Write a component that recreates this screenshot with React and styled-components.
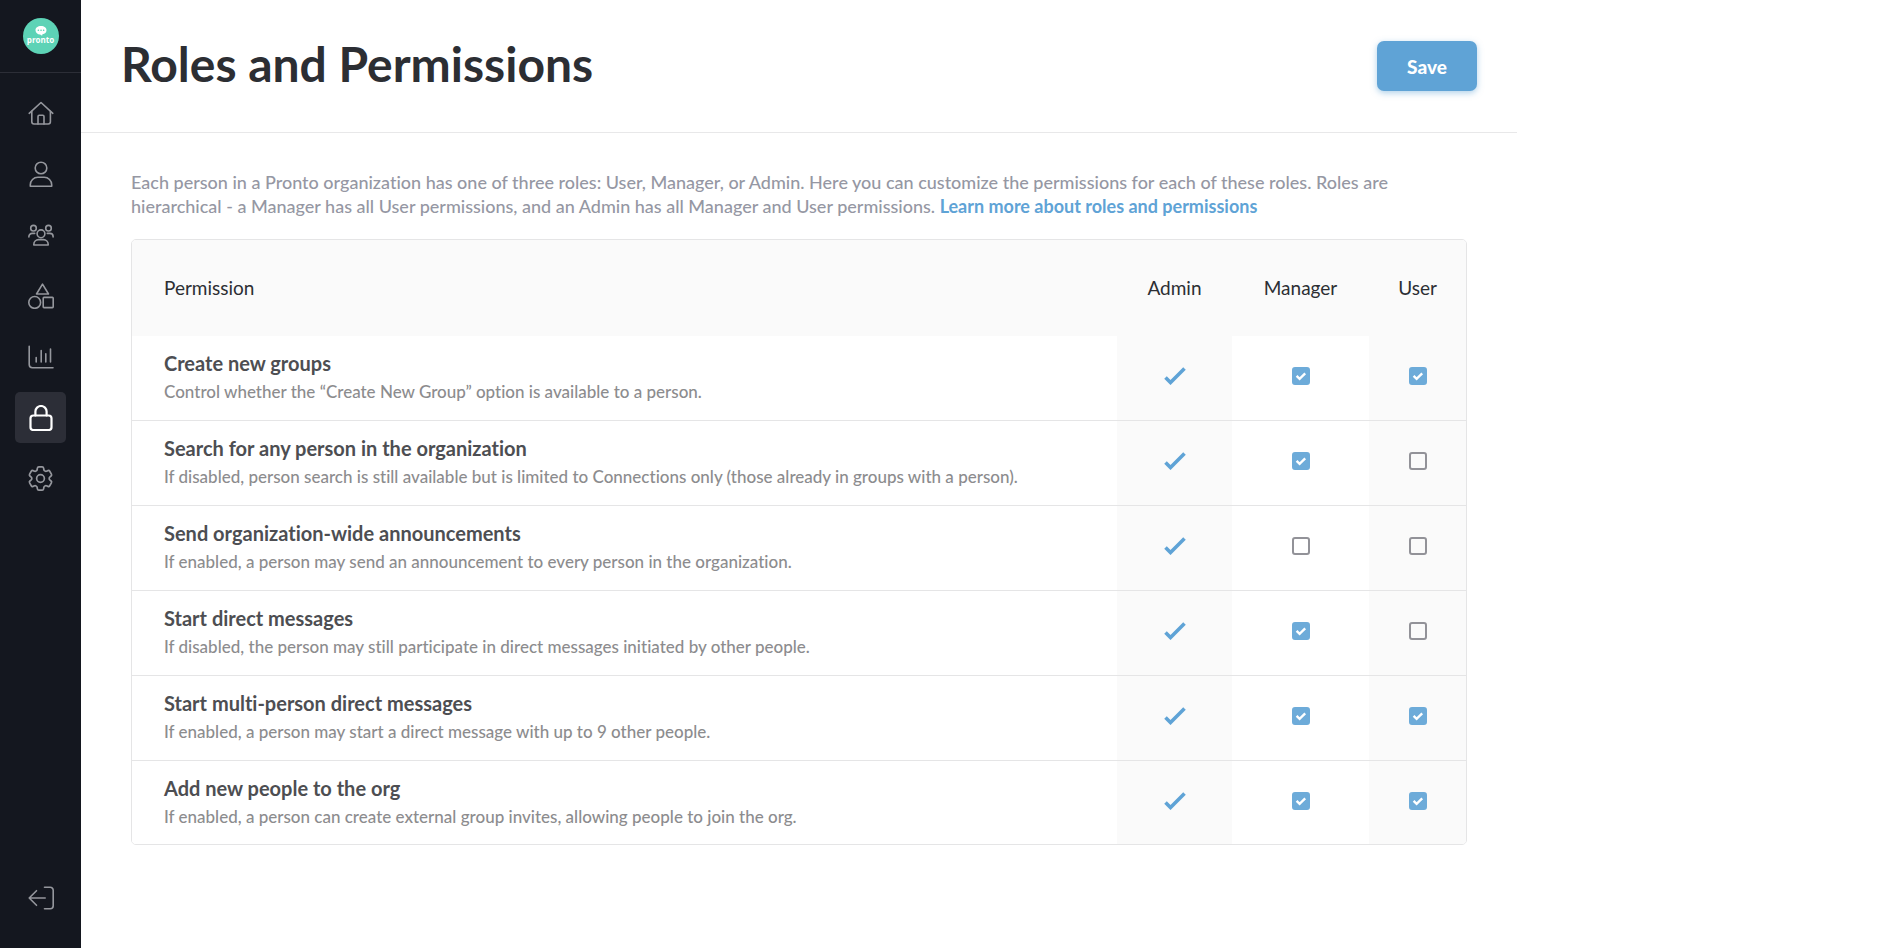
import React, { useState } from 'react';
import styled, { createGlobalStyle } from 'styled-components';
import { HiOutlineCog6Tooth } from 'react-icons/hi2';

const navItems = [
  {
    label: 'Home',
    icon: (
      <>
        <path d="M1.2 13.3 13 2.5l11.8 10.8" />
        <path d="M3.8 11.2v10.6a2.2 2.2 0 0 0 2.2 2.2h14.2a2.2 2.2 0 0 0 2.2-2.2V11.2" />
        <path d="M10 24v-7.5a1.2 1.2 0 0 1 1.2-1.2h3.6a1.2 1.2 0 0 1 1.2 1.2V24" />
      </>
    ),
  },
  {
    label: 'People',
    icon: (
      <>
        <circle cx="13" cy="7" r="5.8" />
        <path d="M2.3 25.2v-1.4a7.5 7.5 0 0 1 7.5-7.5h6.4a7.5 7.5 0 0 1 7.5 7.5v1.4z" />
      </>
    ),
  },
  {
    label: 'Groups',
    icon: (
      <>
        <circle cx="13" cy="11.8" r="3.9" />
        <circle cx="5.5" cy="6.2" r="2.8" />
        <circle cx="20.5" cy="6.2" r="2.8" />
        <path d="M5.8 23v-.6a4.8 4.8 0 0 1 4.8-4.8h4.8a4.8 4.8 0 0 1 4.8 4.8v.6z" />
        <path d="M.9 15v-.4a3.2 3.2 0 0 1 3.2-3.2h2.6M25.1 15v-.4a3.2 3.2 0 0 0-3.2-3.2h-2.6" />
      </>
    ),
  },
  {
    label: 'Categories',
    icon: (
      <>
        <path d="M14.5 1.2 20.5 11H8.5z" />
        <circle cx="6.7" cy="19.4" r="5.9" />
        <rect x="15.2" y="14.4" width="10" height="10.2" rx=".8" />
      </>
    ),
  },
  {
    label: 'Insights',
    icon: (
      <>
        <path d="M1.2 2.2v18.3a3.2 3.2 0 0 0 3.2 3.2H25" />
        <path d="M8.2 13.5V18M13.2 6.5V18M17.8 9.8V18M22.5 5V18" />
      </>
    ),
  },
  {
    label: 'Permissions',
    active: true,
    icon: (
      <>
        <rect x="2.5" y="10.5" width="21" height="14.5" rx="2.8" />
        <path d="M7.4 10.5V6.6a5.6 5.6 0 0 1 11.2 0v3.9" />
      </>
    ),
  },
];

const initialPermissions = [
  {
    id: 'create',
    title: 'Create new groups',
    text: 'Control whether the “Create New Group” option is available to a person.',
    manager: true,
    user: true,
  },
  {
    id: 'search',
    title: 'Search for any person in the organization',
    text: 'If disabled, person search is still available but is limited to Connections only (those already in groups with a person).',
    manager: true,
    user: false,
  },
  {
    id: 'announce',
    title: 'Send organization-wide announcements',
    text: 'If enabled, a person may send an announcement to every person in the organization.',
    manager: false,
    user: false,
  },
  {
    id: 'dm',
    title: 'Start direct messages',
    text: 'If disabled, the person may still participate in direct messages initiated by other people.',
    manager: true,
    user: false,
  },
  {
    id: 'multi',
    title: 'Start multi-person direct messages',
    text: 'If enabled, a person may start a direct message with up to 9 other people.',
    manager: true,
    user: true,
  },
  {
    id: 'invite',
    title: 'Add new people to the org',
    text: 'If enabled, a person can create external group invites, allowing people to join the org.',
    manager: true,
    user: true,
  },
];

const Check = ({ checked, label, onChange }) => (
  <CheckLabel>
    <CheckInput type="checkbox" aria-label={label} checked={checked} onChange={onChange} />
    {checked && (
      <CheckMark viewBox="0 0 18 18" aria-hidden="true">
        <path d="m4.6 8.8 3 3 5.6-5.4" />
      </CheckMark>
    )}
  </CheckLabel>
);

const Sidebar = () => (
  <Side>
    <LogoArea>
      <Logo href="#" aria-label="Pronto">
        <LogoBubble viewBox="0 0 12 10" aria-hidden="true">
          <path d="M6 0C2.7 0 .5 1.8.5 4.200S2.700 8.400 5 8.400c.8 0 1.200.9 2.300 1.200-.2-.6-.1-1 .3-1.300C9.900 7.800 11.500 6.300 11.500 4.200 11.500 1.800 9.300 0 6 0z" fill="#fff" />
          <path d="M3.300 4.200h.1M6 4.200h.1M8.600 4.200h.1" stroke="#5dd3b6" strokeWidth="1.500" strokeLinecap="round" />
        </LogoBubble>
        <LogoText>pronto</LogoText>
      </Logo>
    </LogoArea>
    <Nav>
      {navItems.map(({ label, icon, active }) => (
        <NavItem key={label} href="#" aria-label={label} $active={active}>
          <Icon viewBox="0 0 26 26">{icon}</Icon>
        </NavItem>
      ))}
      <NavItem href="#" aria-label="Settings">
        <HiOutlineCog6Tooth size={31} strokeWidth={1.3} />
      </NavItem>
    </Nav>
    <NavItem href="#" aria-label="Log out">
      <Icon viewBox="0 0 26 26">
        <path d="M17.200 13H1.200M8.500 5.700 1.200 13l7.300 7.300" />
        <path d="M16.500 2.300h5.700a3 3 0 0 1 3 3v15.400a3 3 0 0 1-3 3h-5.700" />
      </Icon>
    </NavItem>
  </Side>
);

const App = () => {
  const [permissions, setPermissions] = useState(initialPermissions);

  const toggle = (id, role) =>
    setPermissions(permissions.map(p => (p.id === id ? { ...p, [role]: !p[role] } : p)));

  return (
    <Page>
      <GlobalStyle />
      <Sidebar />
      <Main>
        <Header>
          <Title>Roles and Permissions</Title>
          <SaveButton type="button">Save</SaveButton>
        </Header>
        <Content>
          <Intro>
            Each person in a Pronto organization has one of three roles: User, Manager, or Admin.
            Here you can customize the permissions for each of these roles. Roles are
            hierarchical - a Manager has all User permissions, and an Admin has all Manager and
            User permissions. <IntroLink href="#">Learn more about roles and permissions</IntroLink>
          </Intro>
          <Table>
            <thead>
              <tr>
                <HeadCell scope="col">Permission</HeadCell>
                <HeadCell scope="col" $width={115}>Admin</HeadCell>
                <HeadCell scope="col" $width={137}>Manager</HeadCell>
                <HeadCell scope="col" $width={97}>User</HeadCell>
              </tr>
            </thead>
            <tbody>
              {permissions.map(({ id, title, text, manager, user }) => (
                <Row key={id}>
                  <NameCell>
                    <Name>{title}</Name>
                    <Description>{text}</Description>
                  </NameCell>
                  <Cell $shaded>
                    <AdminTick viewBox="0 0 22 18" role="img" aria-label="Always allowed">
                      <path d="m1.500 10.500 5 5L20.500 1.500" />
                    </AdminTick>
                  </Cell>
                  <Cell>
                    <Check checked={manager} label={`${title}: Manager`} onChange={() => toggle(id, 'manager')} />
                  </Cell>
                  <Cell $shaded>
                    <Check checked={user} label={`${title}: User`} onChange={() => toggle(id, 'user')} />
                  </Cell>
                </Row>
              ))}
            </tbody>
          </Table>
        </Content>
      </Main>
    </Page>
  );
};

const GlobalStyle = createGlobalStyle`
  * {
    box-sizing: border-box;
  }

  body {
    margin: 0;
    background: #fff;
    font-family: Lato, "Liberation Sans", sans-serif;
    font-variant-ligatures: none;
  }
`;

const Page = styled.div`
  display: flex;
  min-height: 100vh;
`;

const Side = styled.aside`
  display: flex;
  flex-direction: column;
  align-items: center;
  flex: 0 0 81px;
  padding-bottom: 25px;
  background: #14171f;
`;

const LogoArea = styled.div`
  display: flex;
  justify-content: center;
  align-items: center;
  align-self: stretch;
  height: 73px;
  border-bottom: 1px solid #2c2e37;
`;

const Logo = styled.a`
  display: flex;
  flex-direction: column;
  align-items: center;
  width: 36px;
  height: 36px;
  padding-top: 8px;
  border-radius: 50%;
  background: #5dd3b6;
  color: #fff;
  text-decoration: none;
`;

const LogoBubble = styled.svg`
  width: 12px;
  height: 10px;
`;

const LogoText = styled.span`
  font: 700 8px/8px "Open Sans", sans-serif;
`;

const Nav = styled.nav`
  display: flex;
  flex-direction: column;
  gap: 10px;
  margin: 14px 0 auto;
`;

const NavItem = styled.a`
  display: flex;
  justify-content: center;
  align-items: center;
  width: 51px;
  height: 51px;
  border-radius: 5px;
  background: ${({ $active }) => ($active ? '#2c2e37' : 'none')};
  color: ${({ $active }) => ($active ? '#fff' : '#95979d')};
  stroke-width: ${({ $active }) => ($active ? 2.2 : 1.6)};
`;

const Icon = styled.svg`
  width: 26px;
  height: 26px;
  fill: none;
  stroke: currentColor;
  stroke-linecap: round;
  stroke-linejoin: round;
`;

const Main = styled.main`
  flex: 1;
  max-width: 1436px;
`;

const Header = styled.header`
  display: flex;
  justify-content: space-between;
  align-items: center;
  height: 133px;
  padding: 0 40px;
  border-bottom: 1px solid #e8e8e9;
`;

const Title = styled.h1`
  margin: 0;
  padding-bottom: 6px;
  color: #2c2e33;
  font-size: 48px;
  font-weight: 700;
`;

const SaveButton = styled.button`
  width: 100px;
  height: 50px;
  border: 0;
  border-radius: 7px;
  background: #5fa3d6;
  box-shadow: 0 2px 6px rgba(95, 163, 214, .5);
  color: #fff;
  font-family: inherit;
  font-size: 19px;
  font-weight: 900;
`;

const Content = styled.div`
  padding: 37px 50px;
`;

const Intro = styled.p`
  margin: 0 0 21px;
  color: #9597a3;
  font-size: 18px;
  font-weight: 500;
  line-height: 24px;
`;

const IntroLink = styled.a`
  color: #5fa3d6;
  font-weight: 700;
  text-decoration: none;
`;

const Table = styled.table`
  width: 100%;
  border: 1px solid #e5e5e6;
  border-radius: 5px;
  border-spacing: 0;
  overflow: hidden;
`;

const HeadCell = styled.th`
  width: ${({ $width }) => ($width ? `${$width}px` : 'auto')};
  height: 96px;
  padding: ${({ $width }) => ($width ? '0 0 2px' : '0 32px 2px')};
  background: #fafafa;
  color: #2c2e33;
  font-size: 19px;
  font-weight: 400;
  text-align: ${({ $width }) => ($width ? 'center' : 'left')};
`;

const Cell = styled.td`
  height: 85px;
  padding: 0 0 6px;
  border-bottom: 1px solid #e5e5e6;
  background: ${({ $shaded }) => ($shaded ? '#fafafa' : '#fff')};
  text-align: center;
  vertical-align: middle;
`;

const NameCell = styled(Cell)`
  padding: 0 32px;
  text-align: left;
`;

const Row = styled.tr`
  &:last-child td {
    height: 83px;
    border-bottom: 0;
  }
`;

const Name = styled.div`
  color: #4d4e52;
  font-size: 20px;
  font-weight: 700;
  line-height: 28px;
`;

const Description = styled.div`
  color: #8c8c8e;
  font-size: 17px;
  font-weight: 500;
  line-height: 30px;
`;

const CheckLabel = styled.label`
  display: inline-grid;
  vertical-align: middle;
`;

const CheckInput = styled.input`
  grid-area: 1 / 1;
  width: 18px;
  height: 18px;
  margin: 0;
  appearance: none;
  border: 2px solid #929298;
  border-radius: 3px;

  &:checked {
    border-color: #6dabd9;
    background: #6dabd9;
  }
`;

const CheckMark = styled.svg`
  grid-area: 1 / 1;
  width: 18px;
  height: 18px;
  fill: none;
  stroke: #fff;
  stroke-width: 2.4;
  pointer-events: none;
`;

const AdminTick = styled.svg`
  width: 22px;
  height: 18px;
  fill: none;
  stroke: #5fa3d6;
  stroke-width: 3.6;
  vertical-align: middle;
`;

export default App;
